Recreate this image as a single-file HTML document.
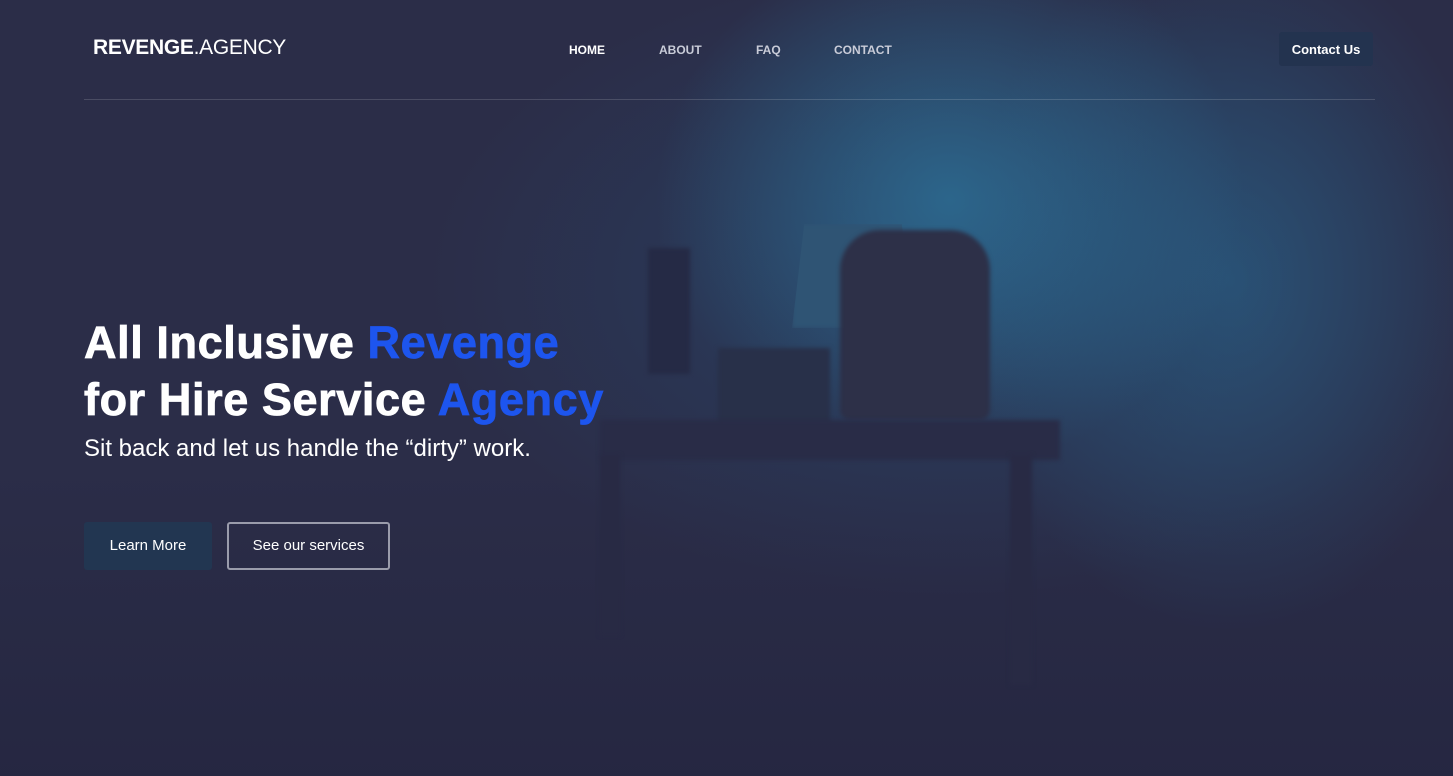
<!DOCTYPE html>
<html><head><meta charset="utf-8"><style>
*{margin:0;padding:0;box-sizing:border-box}
body{width:1453px;height:776px;overflow:hidden;font-family:"Liberation Sans",sans-serif;background:#2b2d48;position:relative;color:#fff}
.bg{position:absolute;inset:0;
background:
radial-gradient(ellipse 420px 380px at 950px 200px,rgba(45,120,160,.7),rgba(45,110,150,0) 70%),
radial-gradient(ellipse 380px 500px at 1230px 280px,rgba(40,100,140,.6),rgba(40,100,140,0) 70%),
radial-gradient(ellipse 700px 420px at 950px 280px,rgba(40,80,120,.5),rgba(40,80,120,0) 75%),
linear-gradient(180deg,rgba(0,0,0,0) 60%,rgba(20,20,45,.25) 100%),#2b2d48}
.sil{position:absolute;filter:blur(2px)}
.logo{position:absolute;left:93px;top:36px;font-size:21px;letter-spacing:-.3px}
.logo b{font-weight:700}
nav a{position:absolute;top:43px;font-size:12px;font-weight:700;color:#c9ccd8;text-decoration:none}
.cta{position:absolute;left:1279px;top:32px;width:94px;height:34px;background:#23334f;border-radius:3px;font-size:13px;font-weight:700;text-align:center;line-height:36px}
.hr{position:absolute;left:84px;top:99px;width:1291px;height:1px;background:rgba(255,255,255,.15)}
h1{position:absolute;left:84px;top:314px;font-size:45px;line-height:57px;font-weight:700;letter-spacing:.6px;-webkit-text-stroke:.8px currentColor}
h1 span{color:#1d55ee}
.sub{position:absolute;left:84px;top:435px;font-size:24px}
.b1{position:absolute;left:84px;top:522px;width:128px;height:48px;background:#223651;border-radius:3px;font-size:15px;text-align:center;line-height:48px}
.b2{position:absolute;left:227px;top:522px;width:163px;height:48px;border:2px solid #9a9cab;border-radius:3px;font-size:15px;text-align:center;line-height:44px}
</style></head><body>
<div class="bg"></div>
<div class="sil" style="left:792px;top:224px;width:122px;height:104px;background:#2f5474;clip-path:polygon(10% 0,90% 0,100% 100%,0 100%)"></div>
<div class="sil" style="left:648px;top:248px;width:42px;height:126px;background:#252a45"></div>
<div class="sil" style="left:718px;top:348px;width:112px;height:76px;background:#283049"></div>
<div class="sil" style="left:840px;top:230px;width:150px;height:190px;background:#2d3048;border-radius:40px 40px 10px 10px"></div>
<div class="sil" style="left:600px;top:420px;width:460px;height:40px;background:#292c47"></div>
<div class="sil" style="left:600px;top:455px;width:20px;height:180px;background:#282a44"></div>
<div class="sil" style="left:1010px;top:455px;width:22px;height:230px;background:#282a44"></div>
<div class="logo"><b>REVENGE</b>.AGENCY</div>
<nav><a style="left:569px;color:#fff">HOME</a><a style="left:659px">ABOUT</a><a style="left:756px">FAQ</a><a style="left:834px">CONTACT</a></nav>
<div class="cta">Contact Us</div>
<div class="hr"></div>
<h1>All Inclusive <span>Revenge</span><br>for Hire Service <span>Agency</span></h1>
<div class="sub">Sit back and let us handle the “dirty” work.</div>
<div class="b1">Learn More</div>
<div class="b2">See our services</div>
</body></html>
